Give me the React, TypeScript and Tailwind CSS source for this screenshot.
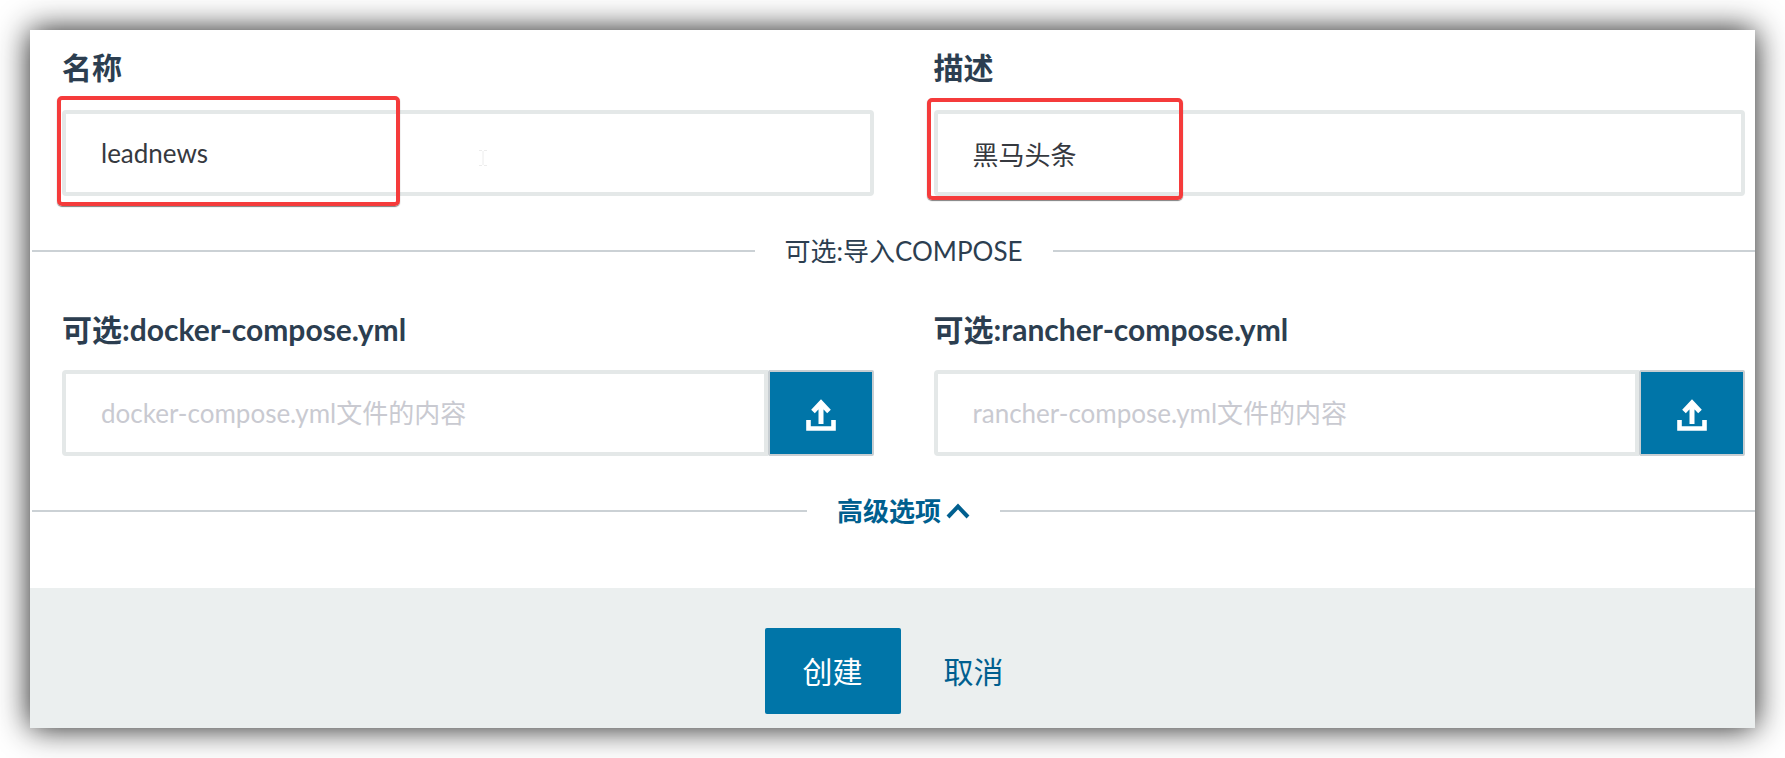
import type { ReactNode } from 'react';

const UploadIcon = () => (
  <svg width="30" height="32" viewBox="0 0 30 32" fill="none" stroke="#fff" aria-hidden="true">
    <path d="M15 25V5M7 12.5L15 4L23 12.5" strokeWidth="5" />
    <path d="M2.5 21V29.5H27.5V21" strokeWidth="4.6" />
  </svg>
);

const Chevron = () => (
  <svg width="24" height="16" viewBox="0 0 24 16" fill="none" stroke="#005f8f" aria-hidden="true">
    <path d="M2 14L12 3.5L22 14" strokeWidth="4" />
  </svg>
);

const TextCursor = () => (
  <svg width="8" height="16" viewBox="0 0 8 16" fill="none" stroke="#ececec" aria-hidden="true">
    <path d="M0 .5H3M5 .5H8M4 1V15M0 15.5H3M5 15.5H8" />
  </svg>
);

const Label = ({ id, children }: { id: string; children: ReactNode }) => (
  <label htmlFor={id} className="block text-[30px] leading-[38px] font-bold text-[#2c3e50]">
    {children}
  </label>
);

const inputClass =
  'block h-[86px] w-full min-w-0 rounded-[4px] border-4 border-[#e4e8e8] bg-white px-[35px] text-[26px] text-[#36393f] outline-none placeholder:text-[#c9cad1] placeholder:opacity-100';

const Divider = ({ children }: { children: ReactNode }) => (
  <div className="mt-[35px] flex h-10 items-center gap-[30px] text-[26px] leading-[38px] text-[#2c3e50]">
    <span className="h-0.5 flex-1 bg-[#cbd1d5]" />
    {children}
    <span className="h-0.5 flex-1 bg-[#cbd1d5]" />
  </div>
);

const FileField = ({ id, name }: { id: string; name: string }) => (
  <div className="flex min-w-0 flex-col gap-[22px]">
    <Label id={id}>可选:{name}</Label>
    <div className="flex">
      <input id={id} className={inputClass + ' rounded-r-none'} placeholder={name + '文件的内容'} />
      <button
        type="button"
        aria-label={'上传' + name}
        className="flex h-[86px] w-[106px] shrink-0 items-center justify-center rounded-[2px] border-2 border-[#c8ced2] bg-[#0075a8] pt-1"
      >
        <UploadIcon />
      </button>
    </div>
  </div>
);

const highlight =
  'pointer-events-none absolute rounded-[5px] border-4 border-[#f53b3b] shadow-[0_1px_1px_rgba(0,0,0,0.5)]';

export default function App() {
  return (
    <div className="bg-white p-[30px] font-['Lato','Noto_Sans_CJK_SC',sans-serif]">
      <form className="overflow-hidden bg-white shadow-[0_0_30px_rgba(0,0,0,0.9)]">
        <div className="-mr-5 ml-0.5 pt-[18px] pb-[57px]">
          <div className="grid grid-cols-2 gap-[60px] px-[30px]">
            <div className="flex flex-col gap-6">
              <Label id="name">名称</Label>
              <div className="relative">
                <input id="name" className={inputClass} defaultValue="leadnews" />
                <span className={highlight + ' -top-3.5 -left-[5px] h-[110px] w-[343px]'} />
                <span className="pointer-events-none absolute top-10 left-[417px]">
                  <TextCursor />
                </span>
              </div>
            </div>
            <div className="flex flex-col gap-6">
              <Label id="description">描述</Label>
              <div className="relative">
                <input id="description" className={inputClass} defaultValue="黑马头条" />
                <span className={highlight + ' -top-3 -left-[7px] h-[102px] w-64'} />
              </div>
            </div>
          </div>
          <Divider>
            <span>可选:导入COMPOSE</span>
          </Divider>
          <div className="mt-[39px] grid grid-cols-2 gap-[60px] px-[30px]">
            <FileField id="docker" name="docker-compose.yml" />
            <FileField id="rancher" name="rancher-compose.yml" />
          </div>
          <Divider>
            <button type="button" className="flex items-center gap-[5px] font-bold text-[#005f8f]">
              高级选项
              <Chevron />
            </button>
          </Divider>
        </div>
        <div className="flex justify-center bg-[#ebefef] pt-10 pb-3.5 pl-[26px] text-[30px]">
          <button type="button" className="h-[86px] rounded-[2px] bg-[#0075a8] px-[38px] text-white">
            创建
          </button>
          <button type="button" className="h-[86px] px-[43px] text-[#005f8f]">
            取消
          </button>
        </div>
      </form>
    </div>
  );
}
